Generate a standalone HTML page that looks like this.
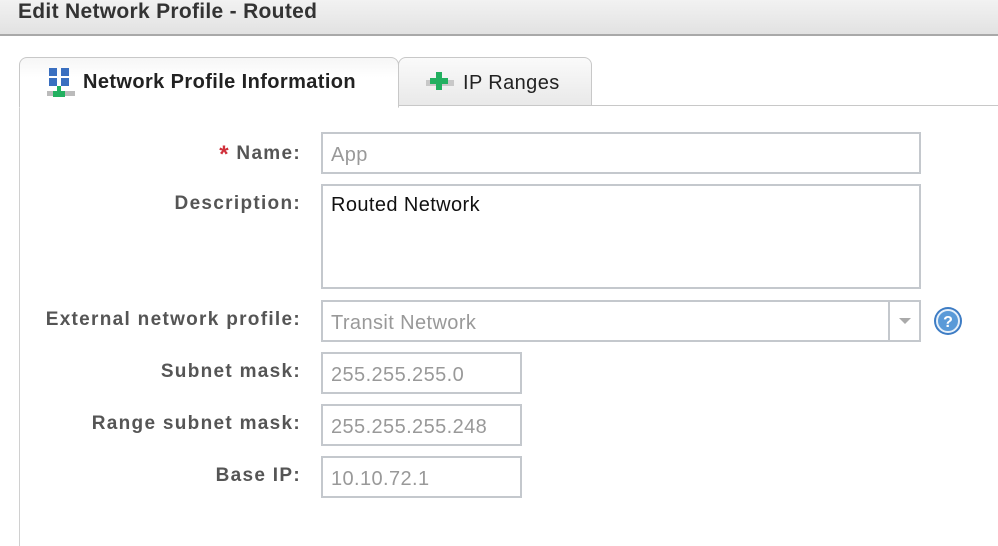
<!DOCTYPE html>
<html><head><style>
body{margin:0;width:998px;height:532px;background:#fff;font-family:"Liberation Sans",sans-serif;position:relative;overflow:hidden}
.hdr{position:absolute;left:0;top:0;width:998px;height:34px;background:linear-gradient(#f2f2f2,#e2e2e2);border-bottom:2px solid #a9a9a9}
.hdr span{position:absolute;left:18px;top:0px;font-size:21px;letter-spacing:0.3px;font-weight:bold;color:#333}
.tab{position:absolute;top:57px;height:48px;border:1px solid #c8c8c8;border-bottom:none;border-radius:8px 8px 0 0;background:linear-gradient(#fafafa,#e9e9e9);font-size:20px;letter-spacing:0.4px;color:#222}
.panel{position:absolute;left:19px;top:105px;width:990px;height:440px;border-left:1px solid #d0d0d0;border-top:1px solid #c8c8c8}
.lbl{position:absolute;right:697px;font-size:19px;letter-spacing:1.3px;font-weight:bold;color:#555;text-align:right;white-space:nowrap}
.in{position:absolute;border:2px solid #c4c8cd;box-sizing:border-box;font-size:20px;letter-spacing:0.4px;color:#999;padding:10px 0 0 8px;background:#fff}
</style></head><body>
<div class="hdr"><span>Edit Network Profile - Routed</span></div>
<div class="panel"></div>
<div class="tab" style="left:19px;width:378px;background:#fff;border-bottom:1px solid #fff;height:49px;background:linear-gradient(#f6f6f6,#fff 40%)">
<svg style="position:absolute;left:27px;top:9px" width="30" height="32" viewBox="0 0 30 32"><rect x="2" y="1" width="8" height="8" fill="#3a6fc0"/><rect x="14" y="1" width="8" height="8" fill="#3a6fc0"/><rect x="2" y="11" width="8" height="8" fill="#3a6fc0"/><rect x="14" y="11" width="8" height="8" fill="#3a6fc0"/><rect x="10" y="19" width="4" height="6" fill="#22b060"/><rect x="0" y="24" width="28" height="5" fill="#bbb"/><rect x="6" y="24" width="12" height="6" fill="#22b060"/></svg>
<span style="position:absolute;left:63px;top:13px;font-weight:bold">Network Profile Information</span></div>
<div class="tab" style="left:398px;width:192px;border-bottom:1px solid #c8c8c8;height:47px">
<svg style="position:absolute;left:27px;top:12px" width="28" height="24" viewBox="0 0 28 24"><rect x="0" y="10" width="28" height="6" fill="#c8c8c8"/><rect x="10" y="2" width="6" height="18" fill="#22b060"/><rect x="4" y="8" width="18" height="6" fill="#22b060"/></svg>
<span style="position:absolute;left:64px;top:14px">IP Ranges</span></div>

<div class="lbl" style="top:141px"><span style="color:#d0303a;font-size:24px;vertical-align:-3px">*</span> Name:</div>
<div class="in" style="left:321px;top:132px;width:600px;height:42px">App</div>
<div class="lbl" style="top:193px">Description:</div>
<div class="in" style="left:321px;top:184px;width:600px;height:105px;color:#111;padding-top:8px">Routed Network</div>
<div class="lbl" style="top:309px">External network profile:</div>
<div class="in" style="left:321px;top:300px;width:600px;height:42px">Transit Network</div>
<div style="position:absolute;left:888px;top:302px;width:2px;height:38px;background:#c4c8cd"></div>
<div style="position:absolute;left:899px;top:318px;border:6px solid transparent;border-top:6px solid #aaa;border-bottom:0"></div>
<svg style="position:absolute;left:933px;top:306px" width="30" height="30" viewBox="0 0 30 30"><circle cx="15" cy="15" r="14" fill="#3d7cc4"/><circle cx="15" cy="15" r="11" fill="#5a9ad8" stroke="#e6f0fa" stroke-width="2"/><text x="15" y="21" font-size="16" font-weight="bold" fill="#fff" text-anchor="middle" font-family="Liberation Sans">?</text></svg>
<div class="lbl" style="top:361px">Subnet mask:</div>
<div class="in" style="left:321px;top:352px;width:201px;height:42px">255.255.255.0</div>
<div class="lbl" style="top:413px">Range subnet mask:</div>
<div class="in" style="left:321px;top:404px;width:201px;height:42px">255.255.255.248</div>
<div class="lbl" style="top:465px">Base IP:</div>
<div class="in" style="left:321px;top:456px;width:201px;height:42px">10.10.72.1</div>
</body></html>
